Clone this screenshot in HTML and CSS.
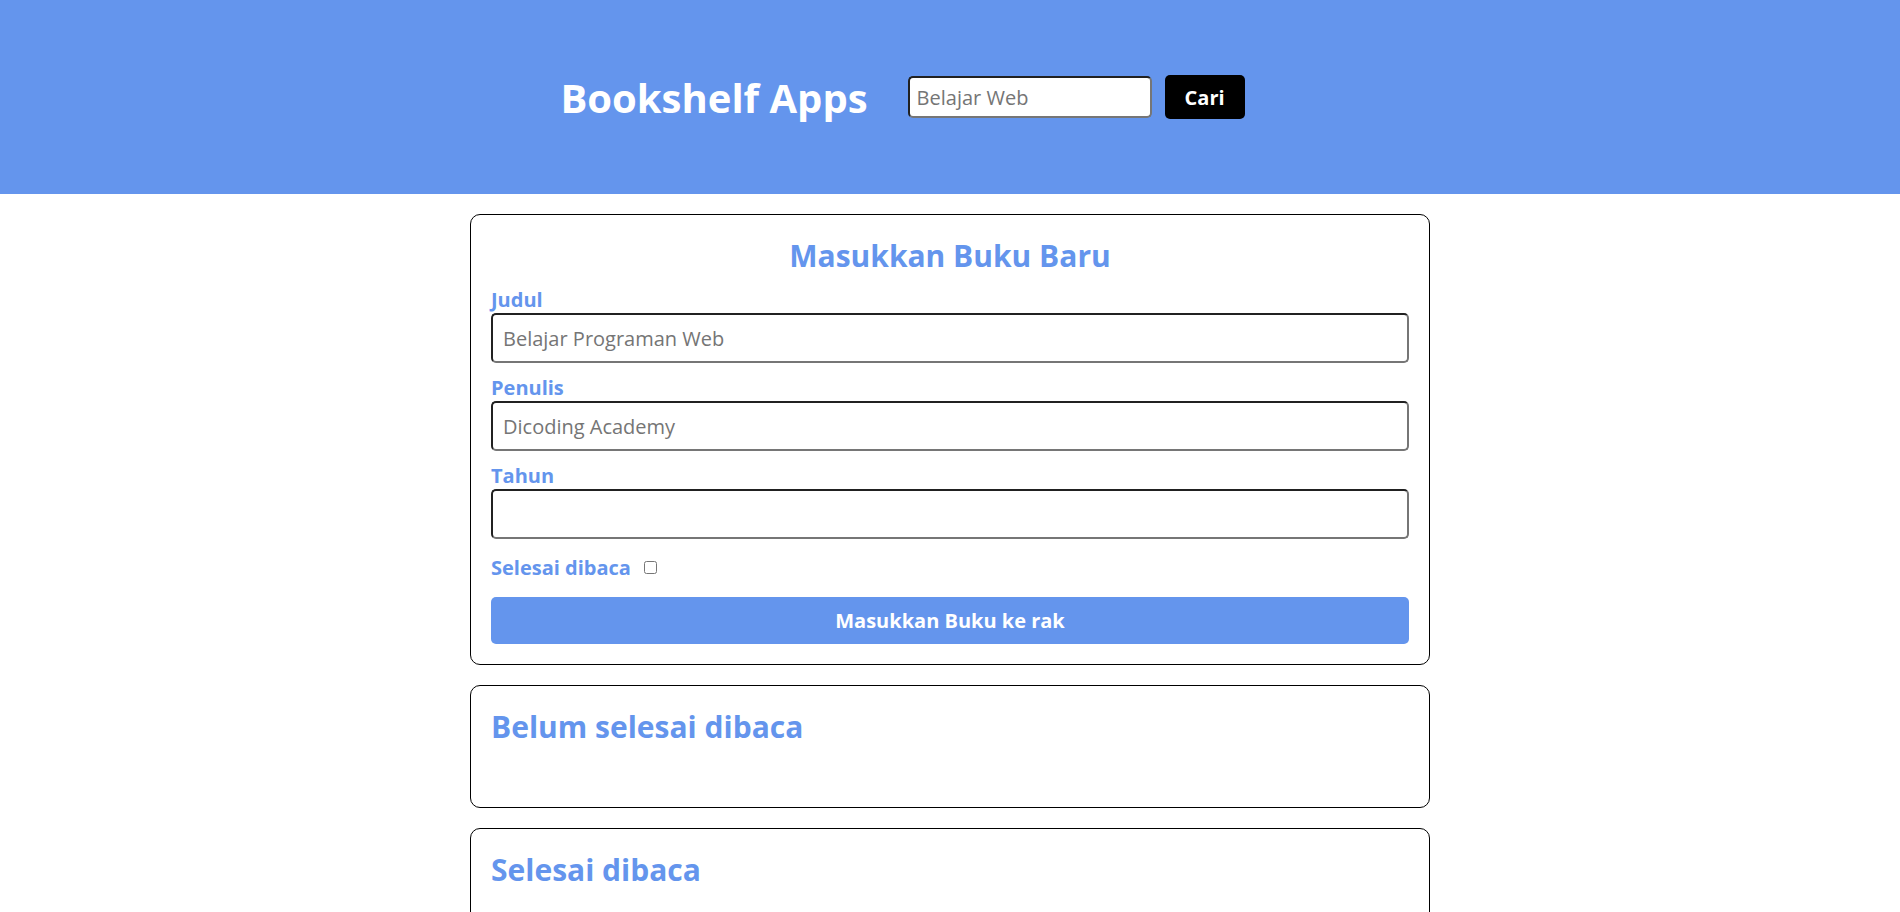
FILE: index.html
```html
<!DOCTYPE html>
<html lang="id">
<head>
<meta charset="utf-8">
<title>Bookshelf Apps</title>
<link rel="stylesheet" href="styles.css">
</head>
<body>
<header class="head-bar">
  <h1 class="app-title">Bookshelf Apps</h1>
  <form class="search-form">
    <input class="search-input" type="text" placeholder="Belajar Web">
    <button class="search-btn" type="button">Cari</button>
  </form>
</header>
<main class="main">
  <section class="card">
    <h2 class="card-title center">Masukkan Buku Baru</h2>
    <form class="book-form">
      <div class="field">
        <label class="field-label">Judul</label>
        <input class="field-input" type="text" placeholder="Belajar Programan Web">
      </div>
      <div class="field">
        <label class="field-label">Penulis</label>
        <input class="field-input" type="text" placeholder="Dicoding Academy">
      </div>
      <div class="field">
        <label class="field-label">Tahun</label>
        <input class="field-input" type="number">
      </div>
      <div class="check-row">
        <label class="field-label">Selesai dibaca</label>
        <input class="check" type="checkbox">
      </div>
      <button class="submit-btn" type="button">Masukkan Buku ke rak</button>
    </form>
  </section>
  <section class="card">
    <h2 class="card-title">Belum selesai dibaca</h2>
    <div class="book-list"></div>
  </section>
  <section class="card">
    <h2 class="card-title">Selesai dibaca</h2>
    <div class="book-list"></div>
  </section>
</main>
</body>
</html>
```
FILE: styles.css
```css
* { box-sizing: border-box; }
body {
  margin: 0;
  font-family: "Open Sans", "Noto Sans", sans-serif;
  font-size: 20px;
  color: #000;
  background: #fff;
}
.head-bar {
  height: 194px;
  background: #6495ed;
  display: flex;
  align-items: center;
  justify-content: center;
  gap: 40px;
  padding-right: 95px;
}
.app-title {
  margin: 0;
  font-size: 40px;
  font-weight: 700;
  color: #fff;
}
.search-form {
  display: flex;
  align-items: center;
  gap: 13px;
}
.search-input {
  width: 244px;
  height: 42px;
  padding: 0 7px;
  font-family: inherit;
  font-size: 20px;
  border: 2px inset #767676;
  border-radius: 5px;
  background: #fff;
}
.search-btn {
  width: 80px;
  height: 44px;
  border: none;
  border-radius: 5px;
  background: #000;
  color: #fff;
  font-family: inherit;
  font-size: 20px;
  font-weight: 700;
}
.main {
  width: 960px;
  margin: 20px auto 0;
}
.card {
  border: 1px solid #000;
  border-radius: 10px;
  padding: 20px;
  margin-bottom: 20px;
}
.card-title {
  margin: 0;
  font-size: 30px;
  font-weight: 700;
  color: #6495ed;
}
.card-title.center {
  text-align: center;
  margin-bottom: 10px;
}
.field + .field { margin-top: 11px; }
.field-label {
  display: block;
  font-weight: 700;
  color: #6495ed;
  line-height: 27px;
}
.field-input {
  display: block;
  width: 100%;
  height: 50px;
  padding: 0 10px;
  font-family: inherit;
  font-size: 20px;
  border: 2px inset #767676;
  border-radius: 5px;
  background: #fff;
}
.check-row {
  display: flex;
  align-items: center;
  gap: 11px;
  margin: 15px 0 16px;
}
.check {
  width: 13px;
  height: 13px;
  margin: 0 0 0 2px;
}
.submit-btn {
  display: block;
  width: 100%;
  height: 47px;
  border: none;
  border-radius: 5px;
  background: #6495ed;
  color: #fff;
  font-family: inherit;
  font-size: 20px;
  font-weight: 700;
}
.book-list { min-height: 40px; }
```
